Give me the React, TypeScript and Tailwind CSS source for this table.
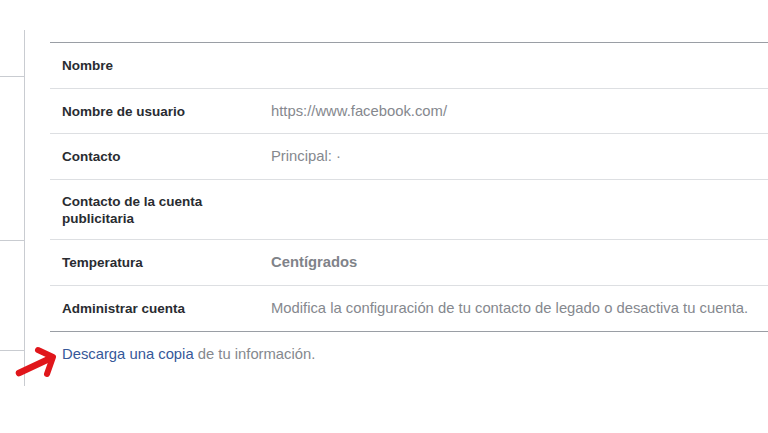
export default function App() {
  const rows: { label: string; value?: string; strong?: boolean; h: string }[] = [
    { label: "Nombre", h: "h-[46px]" },
    { label: "Nombre de usuario", value: "https://www.facebook.com/", h: "h-[45px]" },
    { label: "Contacto", value: "Principal: ·", h: "h-[46px]" },
    { label: "Contacto de la cuenta publicitaria", h: "h-[60px]" },
    { label: "Temperatura", value: "Centígrados", strong: true, h: "h-[46px]" },
    {
      label: "Administrar cuenta",
      value: "Modifica la configuración de tu contacto de legado o desactiva tu cuenta.",
      h: "h-[45px]",
    },
  ];

  return (
    <div
      className="relative w-[768px] h-[433px] overflow-hidden bg-white flex"
      style={{ fontFamily: "'Liberation Sans', Arial, sans-serif" }}
    >
      {/* Left nav stub */}
      <div className="w-[25px] mt-[30px] h-[356px] border-r border-[#c9ccd1] flex flex-col">
        <div className="h-[47px] border-b border-[#c9ccd1]" />
        <div className="h-[164px] border-b border-[#c9ccd1]" />
        <div className="h-[110px] border-b border-[#c9ccd1]" />
      </div>

      {/* Settings panel */}
      <div className="flex-1 ml-[25px] mt-[42px]">
        <div className="border-t border-[#9a9ea5] border-b">
          {rows.map((r, i) => (
            <div
              key={r.label}
              className={`flex items-center ${r.h} ${i < rows.length - 1 ? "border-b border-[#dddfe2]" : ""}`}
            >
              <div className="w-[221px] pl-[12px] pr-[30px] text-[13.5px] leading-[17px] font-bold text-[#292c31]">
                {r.label}
              </div>
              {r.value && (
                <div
                  className={
                    r.strong
                      ? "text-[14.8px] font-bold text-[#7f8389]"
                      : "text-[14.8px] text-[#85888e]"
                  }
                >
                  {r.value}
                </div>
              )}
            </div>
          ))}
        </div>
        <div className="border-t border-[#9a9ea5] -mt-px" />
        <div className="pl-[12px] pt-[11px] text-[14.8px] text-[#85888e]">
          <span className="text-[#365899]">Descarga una copia</span> de tu información.
        </div>
      </div>

      {/* Red arrow annotation */}
      <svg
        className="absolute left-[15px] top-[340px]"
        width="45"
        height="45"
        viewBox="0 0 45 45"
        fill="none"
      >
        <path d="M4 33 L36 18" stroke="#e0161b" strokeWidth="6.5" strokeLinecap="round" />
        <path
          d="M23 10 L38 17 L32 34"
          stroke="#e0161b"
          strokeWidth="6"
          strokeLinecap="round"
          strokeLinejoin="round"
        />
      </svg>
    </div>
  );
}
